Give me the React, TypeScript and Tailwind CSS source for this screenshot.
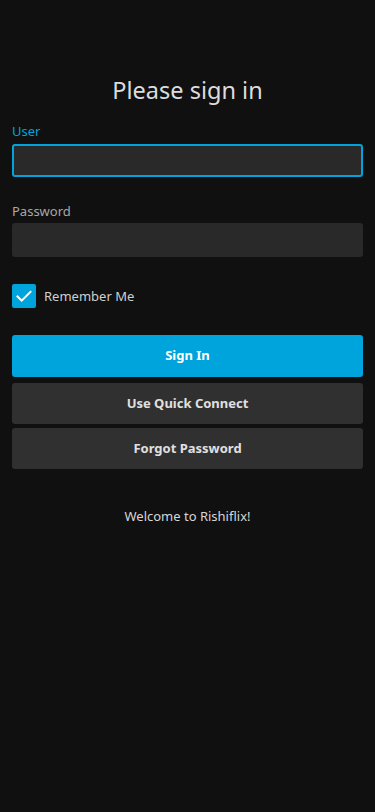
import React from "react";

export default function App() {
  const font = { fontFamily: '"Noto Sans", sans-serif' };
  return (
    <div
      className="min-h-[812px] w-[375px] bg-[#101010] px-[12px] pt-[74px]"
      style={font}
    >
      <h1 className="text-center text-[23.5px] leading-[32px] font-normal text-[#dcdcdc]">
        Please sign in
      </h1>
      <div className="mt-[16px] text-[13px] leading-[18px] text-[#00a4dc]">User</div>
      <div className="mt-[4px] h-[33px] w-full rounded-[3px] border-2 border-[#00a4dc] bg-[#292929]" />
      <div className="mt-[25px] text-[13px] leading-[18px] text-[#a8a8a8]">Password</div>
      <div className="mt-[3px] h-[34px] w-full rounded-[3px] bg-[#292929]" />
      <div className="mt-[27px] flex items-center gap-[8px]">
        <div className="flex h-[24px] w-[24px] items-center justify-center rounded-[2px] bg-[#00a4dc]">
          <svg width="18" height="18" viewBox="0 0 18 18" fill="none">
            <path d="M2.5 9.5l4.2 4.2L15.5 4.8" stroke="white" strokeWidth="2" strokeLinecap="square" />
          </svg>
        </div>
        <span className="text-[13px] leading-[18px] text-[#cfcfcf]">Remember Me</span>
      </div>
      <button className="mt-[27px] flex h-[42px] w-full items-center justify-center rounded-[3px] bg-[#00a4dc] text-[13px] font-bold text-white">
        Sign In
      </button>
      <button className="mt-[6px] flex h-[41px] w-full items-center justify-center rounded-[3px] bg-[#303030] text-[13px] font-bold text-[#e0e0e0]">
        Use Quick Connect
      </button>
      <button className="mt-[4px] flex h-[41px] w-full items-center justify-center rounded-[3px] bg-[#303030] text-[13px] font-bold text-[#e0e0e0]">
        Forgot Password
      </button>
      <p className="mt-[38px] text-center text-[13px] leading-[18px] text-[#d6d6d6]">
        Welcome to Rishiflix!
      </p>
    </div>
  );
}
